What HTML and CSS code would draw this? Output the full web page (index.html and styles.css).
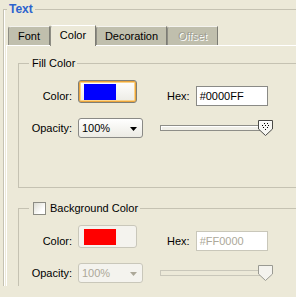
FILE: index.html
```html
<!DOCTYPE html>
<html lang="en">
<head>
    <meta charset="UTF-8">
    <meta name="viewport" content="width=device-width, initial-scale=1.0">
    <title>Text - Color</title>
    <link rel="stylesheet" href="styles.css">
</head>
<body>
    <fieldset class="outer">
        <legend>Text</legend>

        <div class="tabs">
            <div class="tab tab-font">Font</div>
            <div class="tab tab-color active">Color</div>
            <div class="tab tab-decoration">Decoration</div>
            <div class="tab tab-offset disabled">Offset</div>
        </div>

        <div class="panel">
            <fieldset class="box fill">
                <legend>Fill Color</legend>
                <div class="row row-color">
                    <span class="label">Color:</span>
                    <div class="swatch-btn hot"><span class="swatch swatch-blue"></span></div>
                    <span class="hex-label">Hex:</span>
                    <div class="hex">#0000FF</div>
                </div>
                <div class="row row-opacity">
                    <span class="label">Opacity:</span>
                    <div class="combo">
                        <span>100%</span>
                        <svg width="7" height="4" viewBox="0 0 7 4"><path d="M0 0h7L3.5 4z" fill="currentColor"/></svg>
                    </div>
                    <div class="slider">
                        <div class="track"></div>
                        <svg class="thumb" width="15" height="16" viewBox="0 0 15 16">
                            <path d="M0.5 0.5h14v8.5l-7 6.5l-7-6.5z" fill="#f7f7f3" stroke="#4a4a46"/>
                            <path d="M1.5 8.5v-7h12" fill="none" stroke="#fff"/>
                            <g fill="#000">
                                <rect x="6" y="3" width="1" height="1"/>
                                <rect x="9" y="3" width="1" height="1"/>
                                <rect x="4" y="5" width="1" height="1"/>
                                <rect x="7" y="5" width="1" height="1"/>
                                <rect x="10" y="5" width="1" height="1"/>
                                <rect x="5" y="7" width="1" height="1"/>
                                <rect x="9" y="7" width="1" height="1"/>
                                <rect x="7" y="9" width="1" height="1"/>
                            </g>
                        </svg>
                    </div>
                </div>
            </fieldset>

            <fieldset class="box bg disabled">
                <legend><span class="check"></span>Background Color</legend>
                <div class="row row-color">
                    <span class="label">Color:</span>
                    <div class="swatch-btn"><span class="swatch swatch-red"></span></div>
                    <span class="hex-label">Hex:</span>
                    <div class="hex">#FF0000</div>
                </div>
                <div class="row row-opacity">
                    <span class="label">Opacity:</span>
                    <div class="combo">
                        <span>100%</span>
                        <svg width="7" height="4" viewBox="0 0 7 4"><path d="M0 0h7L3.5 4z" fill="currentColor"/></svg>
                    </div>
                    <div class="slider">
                        <div class="track"></div>
                        <svg class="thumb" width="15" height="16" viewBox="0 0 15 16">
                            <path d="M0.5 0.5h14v8.5l-7 6.5l-7-6.5z" fill="#f4f3ee" stroke="#9a9a92"/>
                        </svg>
                    </div>
                </div>
            </fieldset>
        </div>
    </fieldset>
</body>
</html>
```

FILE: styles.css
```css
body {
    margin: 0;
    height: 297px;
    overflow: hidden;
    background: #ece9d8;
    font-family: "Liberation Sans", Arial, sans-serif;
    font-size: 11px;
    color: #000;
}

/* outer group box */
.outer {
    margin: 2px 0 0 3px;
    padding: 0 0 0 2px;
    min-width: 0;
    border: none;
    border-left: 1px solid #c5c2b2;
    border-top: 1px solid #c5c2b2;
    box-shadow: inset 1px 0 0 #fff;
}

.outer > legend {
    margin-left: 1px;
    padding: 0 2px;
    font-size: 12px;
    line-height: 14px;
    font-weight: bold;
    color: #2c63ce;
}

/* tabs */
.tabs {
    display: flex;
    align-items: flex-end;
    height: 20px;
    margin-top: 9px;
    padding-left: 2px;
}

.tab {
    box-sizing: border-box;
    height: 19px;
    line-height: 18px;
    text-align: center;
    background: #c0bfad;
    border: 1px solid;
    border-bottom: none;
    border-color: #f4f3ee #7c7c74 transparent #8e8d84;
    border-top-left-radius: 3px;
}

.tab.active {
    height: 21px;
    margin-bottom: -1px;
    line-height: 19px;
    background: #ece9d8;
    border-color: #fff #7c7c74 transparent #8e8d84;
    position: relative;
    z-index: 1;
}

.tab.disabled {
    color: #a09f93;
    text-shadow: 1px 1px 0 #fff;
}

.tab-font { width: 42px; }
.tab-color { width: 46px; }
.tab-decoration { width: 71px; }
.tab-offset { width: 51px; }

.panel {
    border-top: 1px solid #fff;
    border-left: 1px solid #fff;
    padding: 11px 0 0 11px;
}

/* inner group boxes */
.box {
    margin: 0;
    padding: 0;
    min-width: 0;
    border: none;
    border-left: 1px solid #c5c2b2;
    border-top: 1px solid #c5c2b2;
}

.box > legend {
    display: flex;
    align-items: center;
    margin-left: 10px;
    padding: 0 2px 0 3px;
    line-height: 13px;
}

.box.fill {
    padding-bottom: 46px;
    border-bottom: 1px solid #c5c2b2;
}

.box.bg {
    margin-top: 13px;
}

.box.bg > legend {
    line-height: 14px;
}

.check {
    box-sizing: border-box;
    width: 13px;
    height: 13px;
    margin: 0 4px 0 1px;
    border: 1px solid #8c8c84;
    background: linear-gradient(135deg, #dcdcd2, #fff 70%);
}

/* rows */
.row {
    display: flex;
    align-items: center;
    height: 26px;
}

.row-color {
    margin-top: 13px;
}

.row-opacity {
    margin-top: 6px;
}

.label {
    width: 53px;
    margin-right: 6px;
    text-align: right;
}

.swatch-btn {
    box-sizing: border-box;
    display: flex;
    align-items: center;
    width: 59px;
    height: 23px;
    margin-bottom: 9px;
    padding-left: 5px;
    border: 1px solid #7e7e76;
    border-radius: 3px;
    background: linear-gradient(#fff, #ecebe4);
}

.swatch-btn.hot {
    box-shadow: inset 0 0 0 1px #eaa43c, inset 0 0 0 2px #fbd48a;
}

.swatch {
    width: 32px;
    height: 16px;
}

.swatch-blue { background: #0000ff; }
.swatch-red { background: #ff0000; }

.hex-label {
    margin: 0 6px 0 30px;
}

.hex {
    box-sizing: border-box;
    width: 72px;
    height: 20px;
    line-height: 18px;
    padding-left: 3px;
    background: #fff;
    border: 1px solid #8a8a86;
}

.combo {
    box-sizing: border-box;
    display: flex;
    align-items: center;
    justify-content: space-between;
    width: 65px;
    height: 20px;
    padding: 0 5px 0 3px;
    border: 1px solid #8a8a86;
    border-radius: 3px;
    background: linear-gradient(#fff, #ecebe4);
}

.combo svg {
    margin-top: 1px;
}

.slider {
    display: flex;
    align-items: center;
    margin-left: 17px;
}

.track {
    box-sizing: border-box;
    width: 100px;
    height: 6px;
    border: 1px solid #8e8e88;
    background: #f0efe8;
    box-shadow: inset 1px 1px 0 #fff;
}

.thumb {
    margin-left: -2px;
}

/* disabled group */
.disabled .swatch-btn {
    border-color: #c9c7ba;
    background: #f4f3ee;
}

.disabled .hex {
    color: #aca899;
    border-color: #c9c7ba;
}

.disabled .combo {
    color: #aca899;
    border-color: #c9c7ba;
    background: #f4f3ee;
}

.disabled .track {
    border-color: #c9c7ba;
    background: #ece9d8;
    box-shadow: none;
}
```
